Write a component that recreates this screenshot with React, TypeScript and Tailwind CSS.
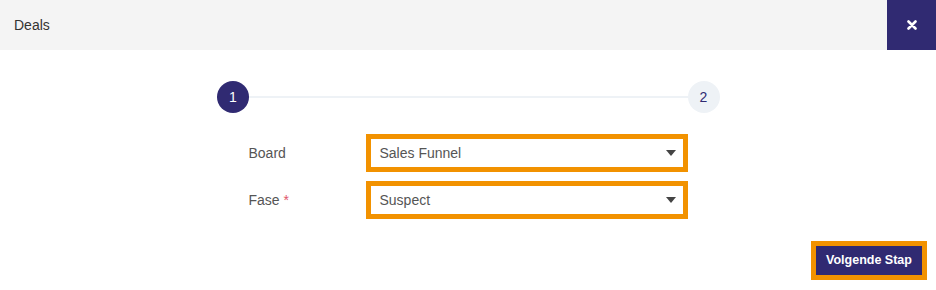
import React, { useState } from 'react'

const boards = ['Sales Funnel']
const fases = ['Suspect']

const Caret: React.FC = () => (
    <svg width="10" height="6" viewBox="0 0 10 6" className="shrink-0">
        <path d="M0 0 L10 0 L5 6 Z" fill="#444" />
    </svg>
)

const SelectBox: React.FC<{ value: string }> = ({ value }) => (
    <div className="flex h-[38px] flex-1 items-center justify-between border-[5px] border-[#f29200] bg-white pl-[9px] pr-[7px] text-[14px] text-[#555]">
        <span>{value}</span>
        <Caret />
    </div>
)

const App: React.FC = () => {
    const [board] = useState(boards[0])
    const [fase] = useState(fases[0])

    return (
        <div className="flex h-[290px] w-[936px] flex-col bg-white font-['Liberation_Sans',Arial,sans-serif]">
            {/* Header */}
            <div className="flex h-[50px] items-center justify-between bg-[#f4f4f4]">
                <span className="pl-[14px] text-[14px] text-[#333]">Deals</span>
                <button className="flex h-[50px] w-[49px] items-center justify-center bg-[#302a72]">
                    <svg width="10" height="10" viewBox="0 0 10 10">
                        <path d="M1.5 1.5 L8.5 8.5 M8.5 1.5 L1.5 8.5" stroke="#fff" strokeWidth="2.6" strokeLinecap="round" />
                    </svg>
                </button>
            </div>

            {/* Stepper */}
            <div className="mx-auto mt-[31px] flex w-[503px] items-center">
                <div className="flex h-[32px] w-[32px] items-center justify-center rounded-full bg-[#302a72] pl-px text-[14px] text-white">
                    1
                </div>
                <div className="h-[2px] flex-1 bg-[#eef2f6]"></div>
                <div className="flex h-[32px] w-[32px] items-center justify-center rounded-full bg-[#eef2f6] text-[14px] text-[#302a72]">
                    2
                </div>
            </div>

            {/* Form */}
            <div className="mx-auto mt-[21px] flex w-[503px] flex-col gap-[9px] px-[32px]">
                <div className="flex items-center">
                    <label className="w-[117px] text-[14px] text-[#555]">Board</label>
                    <SelectBox value={board} />
                </div>
                <div className="flex items-center">
                    <label className="w-[117px] text-[14px] text-[#555]">
                        Fase <span className="text-[#e0556a]">*</span>
                    </label>
                    <SelectBox value={fase} />
                </div>
            </div>

            {/* Footer */}
            <div className="mt-[22px] flex justify-end pr-[9px]">
                <button className="flex h-[39px] w-[116px] items-center justify-center border-[5px] border-[#f29200] bg-[#302a72] text-[12.5px] font-bold text-white">
                    Volgende Stap
                </button>
            </div>
        </div>
    )
}

export default App
